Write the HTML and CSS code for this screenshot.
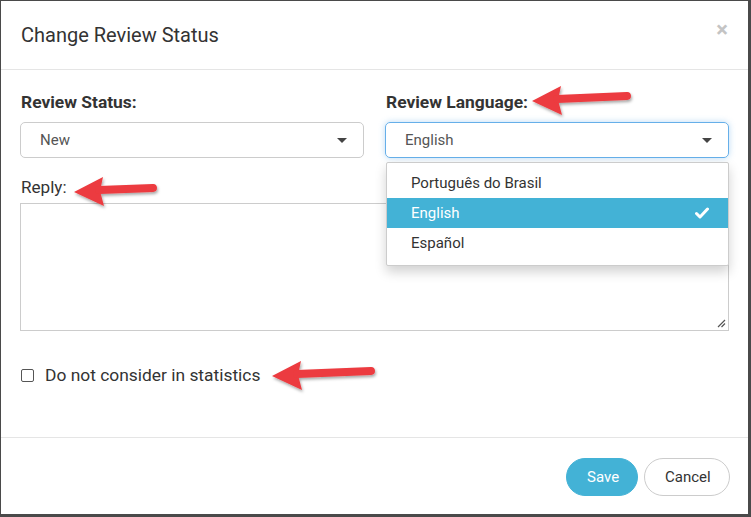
FILE: index.html
```html
<!DOCTYPE html>
<html>
<head>
<meta charset="utf-8">
<link rel="stylesheet" href="styles.css">
</head>
<body>
<div class="modal">
  <div class="modal-header">
    <h4 class="modal-title">Change Review Status</h4>
    <span class="close">×</span>
  </div>
  <div class="modal-body">
    <div class="row">
      <div class="col">
        <label class="label-bold">Review Status:</label>
        <div class="select">
          <span>New</span>
          <span class="caret"></span>
        </div>
      </div>
      <div class="col col-lang">
        <label class="label-bold">Review Language:</label>
        <div class="select select-focus">
          <span>English</span>
          <span class="caret"></span>
        </div>
        <ul class="menu">
          <li>Português do Brasil</li>
          <li class="active">English
            <svg class="check" width="14" height="12" viewBox="0 0 14 12"><path d="M1.5 6.5 L5 10 L12.5 2" fill="none" stroke="#fff" stroke-width="3" stroke-linecap="round" stroke-linejoin="round"/></svg>
          </li>
          <li>Español</li>
        </ul>
      </div>
    </div>
    <label class="label-reply">Reply:</label>
    <div class="textarea">
      <svg class="grip" width="9" height="9" viewBox="0 0 9 9"><path d="M1 8 L8 1 M4.5 8 L8 4.5" stroke="#555" stroke-width="1.2"/></svg>
    </div>
    <label class="check-row">
      <span class="checkbox"></span>
      <span>Do not consider in statistics</span>
    </label>
  </div>
  <div class="modal-footer">
    <button class="btn btn-save">Save</button>
    <button class="btn btn-cancel">Cancel</button>
  </div>

  <svg class="arrow arrow-1" width="102" height="34" viewBox="0 0 102 34"><g filter="url(#sh)"><polygon points="1,18 30,3 27,17 31,32" fill="#ec3b3f"/><line x1="26" y1="16" x2="96" y2="13" stroke="#ec3b3f" stroke-width="8" stroke-linecap="round"/></g></svg>
  <svg class="arrow arrow-2" width="86" height="34" viewBox="0 0 86 34"><g filter="url(#sh)"><polygon points="1,18 30,3 27,17 31,32" fill="#ec3b3f"/><line x1="26" y1="16" x2="80" y2="14" stroke="#ec3b3f" stroke-width="8" stroke-linecap="round"/></g></svg>
  <svg class="arrow arrow-3" width="108" height="34" viewBox="0 0 108 34"><g filter="url(#sh)"><polygon points="1,18 30,3 27,17 31,32" fill="#ec3b3f"/><line x1="26" y1="16" x2="100" y2="13" stroke="#ec3b3f" stroke-width="8" stroke-linecap="round"/></g></svg>
  <svg width="0" height="0" class="defs"><defs><filter id="sh" x="-20%" y="-40%" width="140%" height="200%"><feDropShadow dx="1" dy="2" stdDeviation="1.5" flood-color="#000" flood-opacity="0.35"/></filter></defs></svg>
</div>
</body>
</html>
```

FILE: styles.css
```css
* { box-sizing: border-box; }
html, body { margin: 0; padding: 0; }
body {
  background: #4a4a4a;
  font-family: Roboto, "Liberation Sans", sans-serif;
  color: #333;
  width: 751px;
  height: 517px;
  overflow: hidden;
}
.modal {
  position: relative;
  margin: 1px 0 0 1px;
  width: 747px;
  height: 513px;
  background: #fff;
  display: flex;
  flex-direction: column;
}
.modal-header {
  height: 69px;
  border-bottom: 1px solid #e5e5e5;
  display: flex;
  align-items: center;
  justify-content: space-between;
  padding: 0 19px 0 20px;
}
.modal-title {
  margin: 0;
  font-size: 20px;
  font-weight: 400;
  color: #333;
}
.close {
  font-size: 22px;
  font-weight: 700;
  color: #c4c4c4;
  line-height: 1;
  margin-top: -10px;
  margin-right: 1px;
}
.modal-body {
  padding: 22px 19px 0 19px;
  flex: 1;
}
.row {
  display: flex;
  gap: 21px;
}
.col {
  flex: 1;
  position: relative;
}
.label-bold {
  display: block;
  font-size: 17.4px;
  font-weight: 700;
  color: #333;
  margin-left: 1px;
  line-height: 20px;
  height: 30px;
}
.select {
  height: 36px;
  border: 1px solid #ccc;
  border-radius: 5px;
  display: flex;
  align-items: center;
  justify-content: space-between;
  padding: 0 16px 0 19px;
  font-size: 15px;
  color: #555;
}
.select-focus {
  border-color: #66afe9;
  box-shadow: 0 0 6px rgba(102,175,233,.45);
}
.caret {
  width: 0;
  height: 0;
  border-left: 5px solid transparent;
  border-right: 5px solid transparent;
  border-top: 5px solid #444;
}
.menu {
  position: absolute;
  z-index: 5;
  left: 1px;
  right: 0;
  top: 70px;
  margin: 0;
  list-style: none;
  background: #fff;
  border: 1px solid #ccc;
  border-radius: 2px;
  padding: 5px 0 7px;
  box-shadow: 0 6px 12px rgba(0,0,0,.18);
}
.menu li {
  height: 30px;
  display: flex;
  align-items: center;
  justify-content: space-between;
  padding: 0 19px 0 24px;
  font-size: 15px;
  color: #333;
}
.menu li.active {
  background: #43b2d6;
  color: #fff;
}
.label-reply {
  display: block;
  font-size: 17.1px;
  color: #333;
  margin: 19px 0 0 1px;
  line-height: 20px;
  height: 26px;
}
.textarea {
  position: relative;
  height: 128px;
  border: 1px solid #ccc;
  display: flex;
  align-items: flex-end;
  justify-content: flex-end;
  padding: 0 2px 2px 0;
}
.check-row {
  display: flex;
  align-items: center;
  gap: 11px;
  margin: 34px 0 0 1px;
  font-size: 17.4px;
  color: #333;
}
.checkbox {
  width: 13px;
  height: 13px;
  border: 1px solid #555;
  border-radius: 2px;
  background: #fff;
}
.modal-footer {
  height: 77px;
  border-top: 1px solid #e5e5e5;
  display: flex;
  justify-content: flex-end;
  align-items: center;
  gap: 6px;
  padding: 2px 18px 0 0;
}
.btn {
  font-family: Roboto, "Liberation Sans", sans-serif;
  font-size: 15px;
  height: 38px;
  border-radius: 19px;
  padding: 0 20px;
  cursor: pointer;
}
.btn-save {
  background: #43b2d6;
  border: 1px solid #43b2d6;
  color: #fff;
  width: 72px;
}
.btn-cancel {
  background: #fff;
  border: 1px solid #ccc;
  color: #333;
  width: 86px;
}
.arrow {
  position: absolute;
  z-index: 10;
  overflow: visible;
}
.arrow-1 { left: 530px; top: 82px; }
.arrow-2 { left: 72px; top: 173px; }
.arrow-3 { left: 270px; top: 357px; }
.defs { position: absolute; }
```
